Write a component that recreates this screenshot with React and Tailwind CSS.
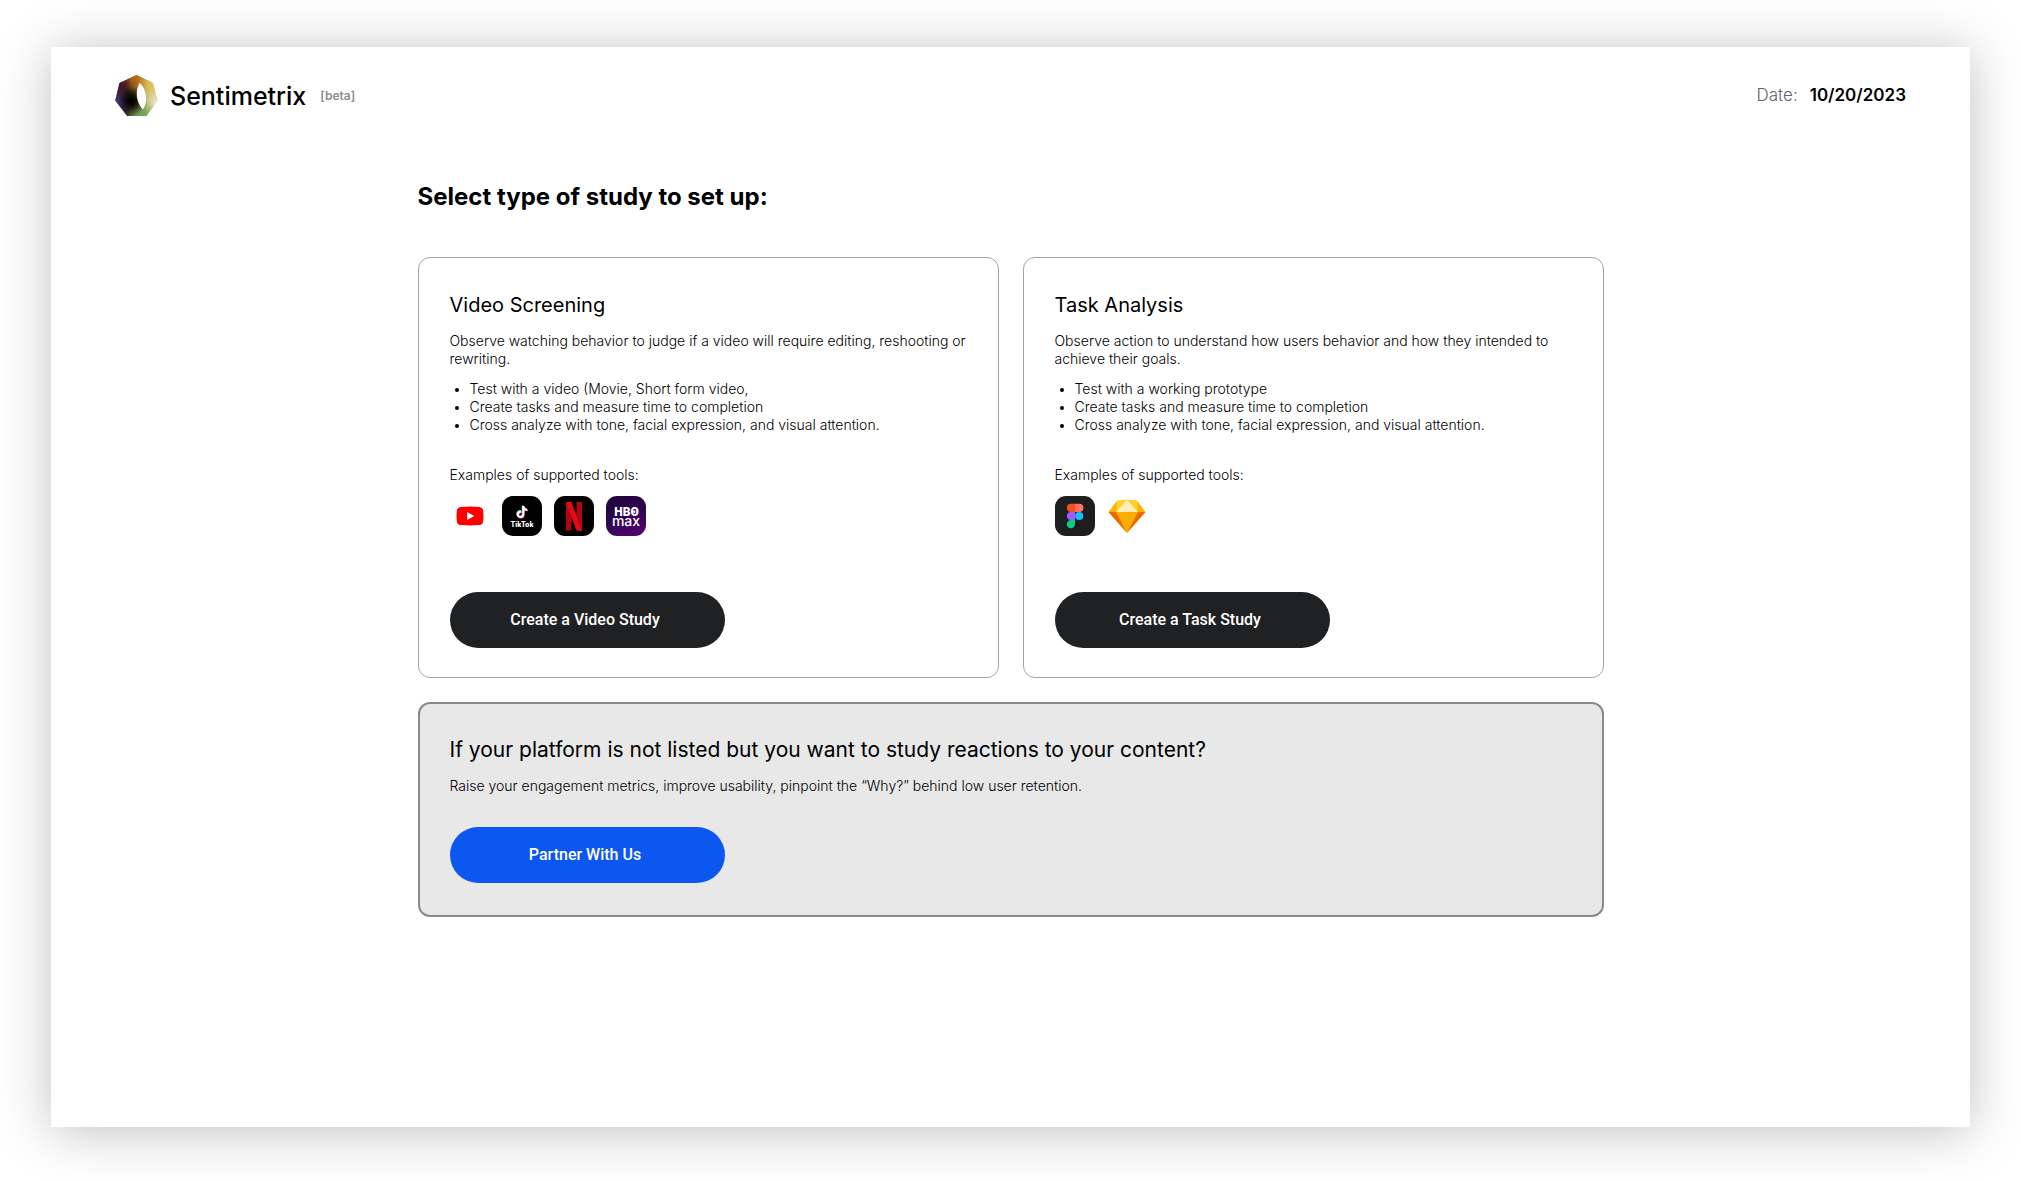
const LogoMark = () => (
  <svg viewBox="0 0 43 41" className="h-[41px] w-[43px]" aria-hidden="true">
    <defs>
      <clipPath id="hept">
        <path d="M21.500 0 38 8 42.500 25.500 31.500 41H12L.3 25.500 4.500 8Z" />
      </clipPath>
      <radialGradient id="orange"><stop offset="0" stopColor="#cf6f12" /><stop offset=".3" stopColor="#c06a14" stopOpacity=".8" /><stop offset="1" stopColor="#d9730a" stopOpacity="0" /></radialGradient>
      <radialGradient id="yellow"><stop offset="0" stopColor="#e8cb68" /><stop offset="1" stopColor="#e8cb68" stopOpacity="0" /></radialGradient>
      <radialGradient id="pale"><stop offset="0" stopColor="#f1f5e4" /><stop offset="1" stopColor="#eef3d8" stopOpacity="0" /></radialGradient>
      <radialGradient id="green"><stop offset="0" stopColor="#67ab63" /><stop offset="1" stopColor="#5fae5a" stopOpacity="0" /></radialGradient>
      <radialGradient id="navy"><stop offset="0" stopColor="#3d3a8c" /><stop offset="1" stopColor="#3a3a86" stopOpacity="0" /></radialGradient>
      <radialGradient id="plum"><stop offset="0" stopColor="#4a1238" /><stop offset="1" stopColor="#4a1238" stopOpacity="0" /></radialGradient>
      <radialGradient id="black"><stop offset="0" stopColor="#000" /><stop offset=".3" stopColor="#000" stopOpacity=".85" /><stop offset="1" stopColor="#000" stopOpacity="0" /></radialGradient>
      <linearGradient id="base"><stop offset=".3" stopColor="#33200f" /><stop offset=".75" stopColor="#b5a552" /></linearGradient>
    </defs>
    <g clipPath="url(#hept)">
      <rect width="43" height="41" fill="url(#base)" />
      <circle cx="22" cy="-1" r="20" fill="url(#orange)" />
      <circle cx="39" cy="10" r="18" fill="url(#yellow)" />
      <circle cx="43" cy="28" r="17" fill="url(#pale)" />
      <circle cx="27" cy="43" r="18" fill="url(#green)" />
      <circle cx="0" cy="28" r="17" fill="url(#navy)" />
      <circle cx="4" cy="10" r="13" fill="url(#plum)" />
      <circle cx="17" cy="26" r="14" fill="url(#black)" />
    </g>
    <path d="M24.500 8C20 16 21 28 28 34.500C33 27 32 14 24.500 8Z" fill="#fff" />
  </svg>
);

const YouTube = () => (
  <svg viewBox="0 0 40 40" className="size-10" role="img" aria-label="YouTube">
    <path d="M10.500 10.900Q20 10.100 29.500 10.900Q32.700 11.200 33.100 14.500Q33.900 20 33.100 25.500Q32.700 28.800 29.500 29.100Q20 29.900 10.500 29.100Q7.300 28.800 6.900 25.500Q6.100 20 6.900 14.500Q7.300 11.200 10.500 10.900Z" fill="#f00" />
    <path d="M17.200 16v8l7-4z" fill="#fff" />
  </svg>
);

const NOTE = "M12.525.02c1.310-.02 2.610-.01 3.910-.02.080 1.530.630 3.090 1.750 4.170 1.120 1.110 2.700 1.620 4.240 1.790v4.030c-1.440-.050-2.890-.350-4.200-.970-.570-.260-1.100-.590-1.620-.930-.010 2.920.010 5.840-.020 8.750-.080 1.400-.540 2.790-1.350 3.940-1.310 1.920-3.580 3.170-5.910 3.210-1.430.080-2.860-.310-4.080-1.030-2.020-1.190-3.440-3.370-3.650-5.710-.020-.500-.030-1-.010-1.490.180-1.900 1.120-3.720 2.580-4.960 1.660-1.440 3.980-2.130 6.150-1.720.020 1.480-.040 2.960-.040 4.440-.990-.320-2.150-.230-3.020.370-.630.410-1.110 1.040-1.360 1.750-.210.510-.150 1.070-.140 1.610.240 1.640 1.820 3.020 3.500 2.870 1.120-.010 2.190-.660 2.770-1.610.190-.330.400-.670.410-1.060.100-1.790.060-3.570.070-5.360.010-4.030-.010-8.050.020-12.070z";

const TikTok = () => (
  <svg viewBox="0 0 40 40" className="size-10" role="img" aria-label="TikTok">
    <rect width="40" height="40" rx="11" />
    <g transform="translate(14 10) scale(.5)">
      <path d={NOTE} fill="#25f4ee" transform="translate(-1 -1)" />
      <path d={NOTE} fill="#fe2c55" transform="translate(1.200 1)" />
      <path d={NOTE} fill="#fff" />
    </g>
    <text x="20" y="30.500" textAnchor="middle" fontSize="7" fontWeight="800" fill="#fff" className="font-['Inter',sans-serif]">TikTok</text>
  </svg>
);

const Netflix = () => (
  <svg viewBox="0 0 40 40" className="size-10" role="img" aria-label="Netflix">
    <rect width="40" height="40" rx="11" />
    <path d="M12 6h5.500v28L12 35ZM22.500 6H28v29l-5.500-.7Z" fill="#b1060f" />
    <path d="M12 6h5.500L28 35l-5.700-.7Z" fill="#e50914" />
  </svg>
);

const HboMax = () => (
  <svg viewBox="0 0 40 40" className="size-10" role="img" aria-label="HBO Max">
    <defs>
      <linearGradient id="hbo" x1=".3" y1="0" x2=".7" y2="1">
        <stop offset="0" stopColor="#22043c" />
        <stop offset=".5" stopColor="#2f0650" />
        <stop offset="1" stopColor="#50056e" />
      </linearGradient>
    </defs>
    <rect width="40" height="40" rx="11" fill="url(#hbo)" />
    <text fill="#fff" textAnchor="middle">
      <tspan x="20.500" y="20" fontSize="12" fontWeight="900" className="font-['Roboto',sans-serif]">HBO</tspan>
      <tspan x="20" y="30" fontSize="14" fontWeight="500" className="font-['Inter',sans-serif]">max</tspan>
    </text>
    <circle cx="28.300" cy="15.700" r="1.200" fill="#fff" />
  </svg>
);

const Figma = () => (
  <svg viewBox="0 0 40 40" className="size-10" role="img" aria-label="Figma">
    <rect width="40" height="40" rx="11" fill="#1e1e1e" />
    <path d="M16 7.700h4v8.200h-4a4.100 4.100 0 0 1 0-8.200Z" fill="#f24e1e" />
    <path d="M20 7.700h4.300a4.100 4.100 0 0 1 0 8.200H20Z" fill="#ff7262" />
    <path d="M16 15.900h4v8.200h-4a4.100 4.100 0 0 1 0-8.200Z" fill="#a259ff" />
    <circle cx="24.200" cy="20" r="4.100" fill="#1abcfe" />
    <path d="M16 24.100h4v4.100a4.100 4.100 0 1 1-4-4.100Z" fill="#0acf83" />
  </svg>
);

const Sketch = () => (
  <svg viewBox="0 0 40 40" className="size-10" role="img" aria-label="Sketch">
    <path d="M10 4.800 20 3.700l10 1.100L38.500 16 20 37 1.500 16Z" fill="#fdb300" />
    <path d="M9.300 16 20 37 1.500 16ZM30.700 16 20 37l18.500-21Z" fill="#ea6c00" />
    <path d="M9.300 16h21.400L20 37Z" fill="#fdad00" />
    <path d="M10 4.800 20 3.700l10 1.100.7 11.200H9.300Z" fill="#fdd231" />
    <path d="M20 3.700 30.700 16H9.300Z" fill="#feeeb7" />
  </svg>
);

const studies = [
  {
    title: "Video Screening",
    text: "Observe watching behavior to judge if a video will require editing, reshooting or rewriting.",
    points: [
      "Test with a video (Movie, Short form video,",
      "Create tasks and measure time to completion",
      "Cross analyze with tone, facial expression, and visual attention.",
    ],
    tools: [YouTube, TikTok, Netflix, HboMax],
    action: "Create a Video Study",
  },
  {
    title: "Task Analysis",
    text: "Observe action to understand how users behavior and how they intended to achieve their goals.",
    points: [
      "Test with a working prototype",
      "Create tasks and measure time to completion",
      "Cross analyze with tone, facial expression, and visual attention.",
    ],
    tools: [Figma, Sketch],
    action: "Create a Task Study",
  },
];

const Pill = ({ className, children }) => (
  <button
    type="button"
    className={`h-14 w-[275px] rounded-full pr-1 text-center font-['Roboto',sans-serif] text-base font-medium text-white ${className}`}
  >
    {children}
  </button>
);

const StudyCard = ({ title, text, points, tools, action }) => (
  <section className="flex flex-col items-start rounded-xl border border-[#a3a3a3] px-[31px] pt-[33px] pb-[29px]">
    <h2 className="text-xl leading-7">{title}</h2>
    <p className="mt-[13px] text-sm leading-[18px] font-light">{text}</p>
    <ul className="mt-3 list-disc pl-5 text-sm leading-[18px] font-light marker:text-xs">
      {points.map((p) => (
        <li key={p}>{p}</li>
      ))}
    </ul>
    <p className="mt-8 text-sm leading-[18px] font-light">Examples of supported tools:</p>
    <div className="mt-3 mb-14 flex gap-3">
      {tools.map((Tool, i) => (
        <Tool key={i} />
      ))}
    </div>
    <Pill className="mt-auto bg-[#1f2123]">{action}</Pill>
  </section>
);

export default function App() {
  return (
    <div className="flex min-h-screen flex-col bg-white px-[51px] pt-[47px] pb-[54px] font-['Inter',sans-serif] text-black">
      <div className="flex-1 bg-white shadow-[0_4px_50px_rgba(0,0,0,0.25)]">
        <header className="flex items-center justify-between px-16 pt-7">
          <div className="flex items-center">
            <LogoMark />
            <h1 className="ml-3 text-[25px] leading-8 font-medium">Sentimetrix</h1>
            <span className="ml-3.5 text-xs font-semibold text-[#8c8c8c]">[beta]</span>
          </div>
          <p className="flex items-center gap-3 pb-0.5 text-[17px] leading-6">
            <span className="font-light text-[#5f6368]">Date:</span>
            <time dateTime="2023-10-20" className="font-semibold">10/20/2023</time>
          </p>
        </header>
        <main className="mx-auto max-w-[1186px] pt-[65px]">
          <h2 className="text-2xl leading-8 font-bold">Select type of study to set up:</h2>
          <div className="mt-11 grid grid-cols-2 gap-6">
            {studies.map((s) => (
              <StudyCard key={s.title} {...s} />
            ))}
          </div>
          <section className="mt-6 rounded-xl border-2 border-[#8a8a8a] bg-[#e8e8e8] px-[30px] pt-8 pb-8">
            <h2 className="text-[21px] leading-7">If your platform is not listed but you want to study reactions to your content?</h2>
            <p className="mt-[13px] mb-8 text-sm leading-[18px] font-light">
              Raise your engagement metrics, improve usability, pinpoint the “Why?” behind low user retention.
            </p>
            <Pill className="bg-[#0b57f0]">Partner With Us</Pill>
          </section>
        </main>
      </div>
    </div>
  );
}
